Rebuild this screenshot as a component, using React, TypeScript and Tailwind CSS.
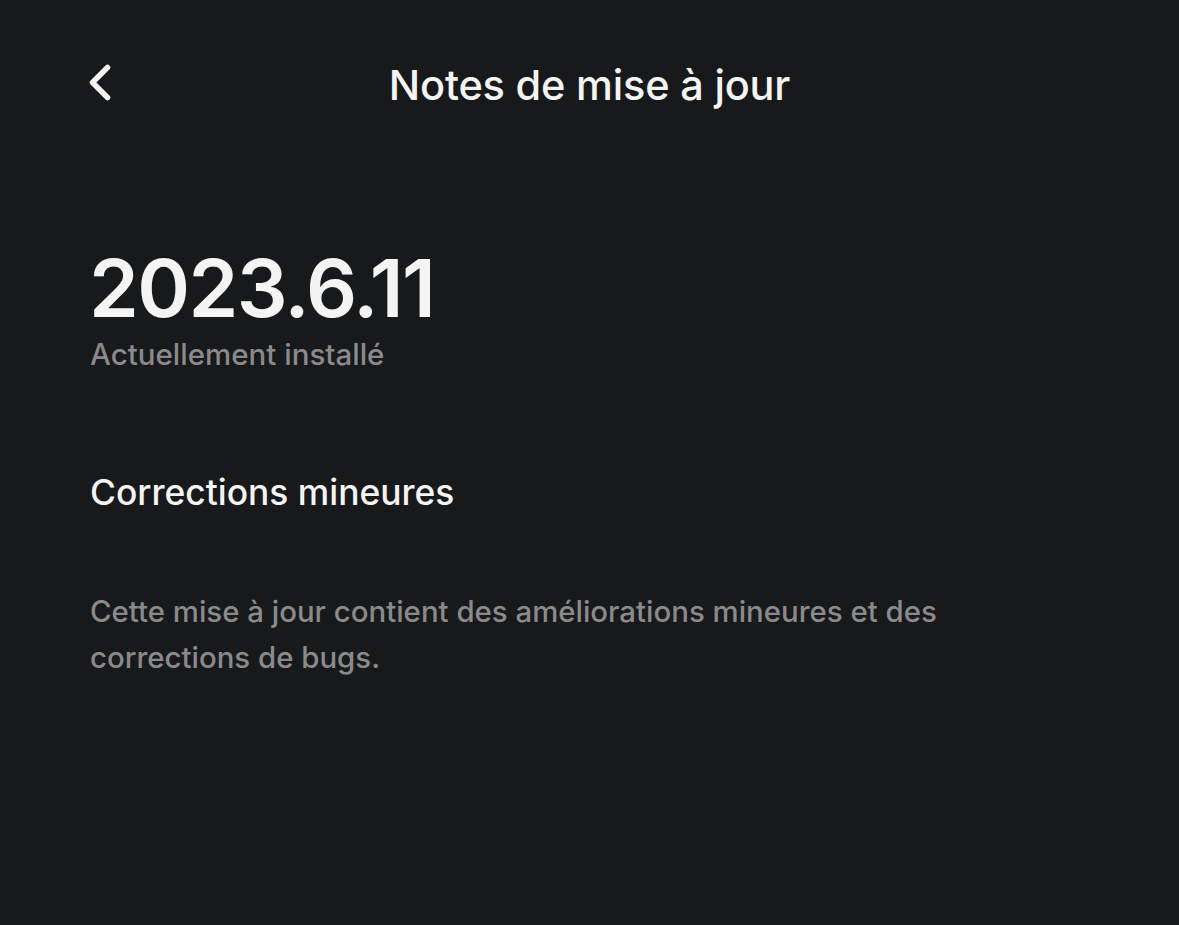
import React from 'react';

export default function App() {
  return (
    <div className="min-h-[925px] w-full bg-[#18191b] text-[#f4f4f4]" style={{ fontFamily: 'Inter, "Noto Sans", sans-serif' }}>
      {/* Header */}
      <header className="relative flex h-[170px] items-start justify-center pt-[61px]">
        <button className="absolute left-[87px] top-[64px] flex h-[40px] w-[28px] items-start">
          <svg width="26" height="40" viewBox="0 0 26 40" fill="none">
            <path d="M20.5 3.5 L5.5 18.5 L20.5 33.5" stroke="#f4f4f4" strokeWidth="5.5" strokeLinecap="round" strokeLinejoin="round" />
          </svg>
        </button>
        <h1 className="text-[41.5px] font-medium leading-[48px] tracking-[-0.2px]">Notes de mise à jour</h1>
      </header>

      <main className="px-[90px]">
        <section className="mt-[78px]">
          <div className="-ml-[1px] text-[80px] font-semibold leading-[80px] tracking-[-1.6px]">2023.6.11</div>
          <div className="mt-[9px] text-[29.5px] font-medium leading-[34px] text-[#8a8a8b]">Actuellement installé</div>
        </section>

        <section className="mt-[102px]">
          <h2 className="text-[35.4px] font-medium leading-[40px]">Corrections mineures</h2>
          <p className="mt-[76px] max-w-[900px] text-[29.4px] font-medium leading-[46px] text-[#8a8a8b]">
            Cette mise à jour contient des améliorations mineures et des corrections de bugs.
          </p>
        </section>
      </main>
    </div>
  );
}
